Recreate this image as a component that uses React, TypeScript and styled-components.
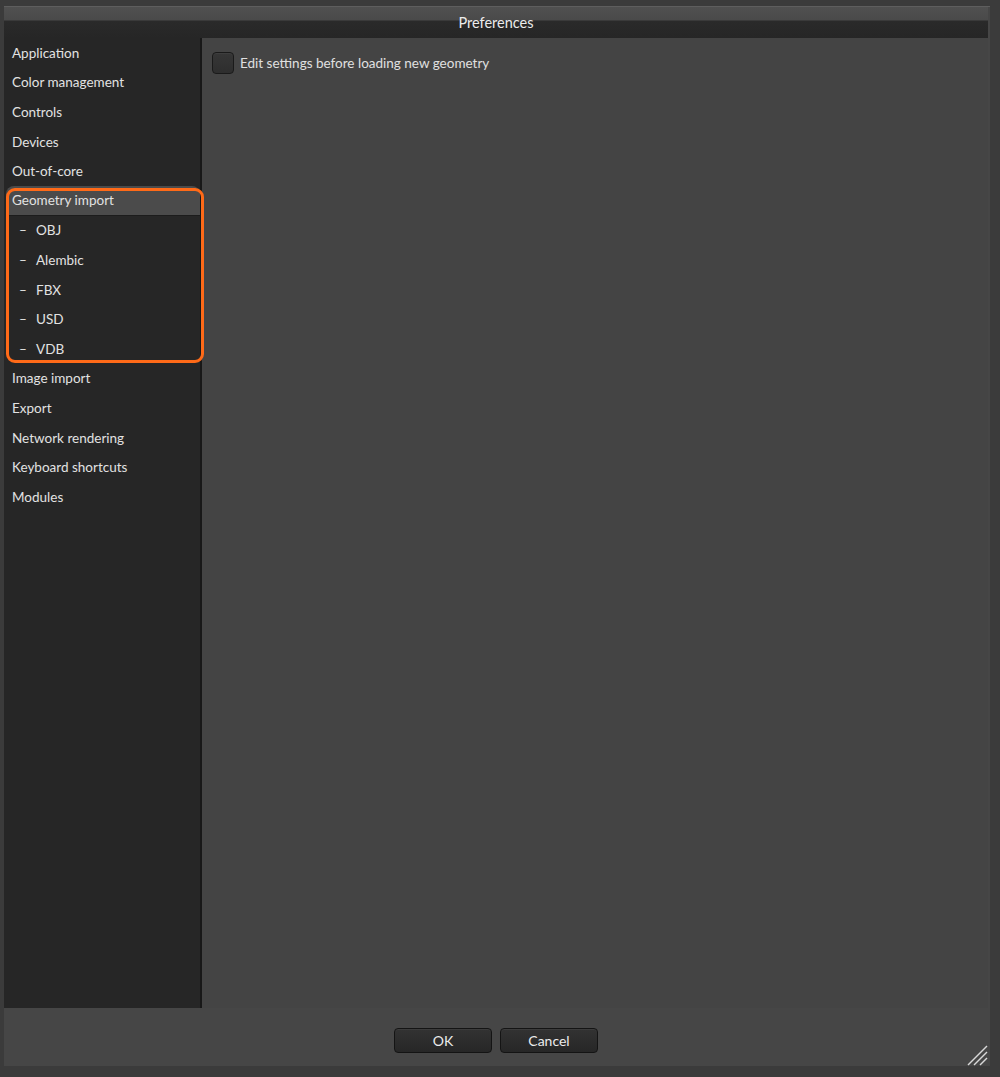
import styled, { createGlobalStyle } from 'styled-components';

type Page = {
    label: string,
    children?: string[],
}

const pages: Page[] = [
    { label: 'Application' },
    { label: 'Color management' },
    { label: 'Controls' },
    { label: 'Devices' },
    { label: 'Out-of-core' },
    { label: 'Geometry import', children: ['OBJ', 'Alembic', 'FBX', 'USD', 'VDB'] },
    { label: 'Image import' },
    { label: 'Export' },
    { label: 'Network rendering' },
    { label: 'Keyboard shortcuts' },
    { label: 'Modules' },
];

const selected = 'Geometry import';

const ResizeGrip = () => (
    <Grip width='22' height='22' viewBox='0 0 22 22'>
        <g stroke='#d8d8d8' strokeWidth='1.4'>
            <line x1='2' y1='21' x2='21' y2='2' />
            <line x1='8' y1='21' x2='21' y2='8' />
            <line x1='14' y1='21' x2='21' y2='14' />
        </g>
    </Grip>
);

export default function App() {
    return (
        <>
            <GlobalStyle />
            <Window>
                <TitleBar>Preferences</TitleBar>
                <Body>
                    <Sidebar>
                        {pages.map((page) =>
                            page.children ? (
                                <Group key={page.label}>
                                    <NavItem $active={page.label === selected}>{page.label}</NavItem>
                                    {page.children.map((child) => (
                                        <SubItem key={child}>
                                            <Dash>–</Dash>
                                            {child}
                                        </SubItem>
                                    ))}
                                </Group>
                            ) : (
                                <NavItem key={page.label} $active={page.label === selected}>{page.label}</NavItem>
                            )
                        )}
                    </Sidebar>
                    <Content>
                        <CheckRow>
                            <CheckBox />
                            <span>Edit settings before loading new geometry</span>
                        </CheckRow>
                    </Content>
                </Body>
                <Footer>
                    <Button>OK</Button>
                    <Button>Cancel</Button>
                </Footer>
                <ResizeGrip />
            </Window>
        </>
    );
}

const GlobalStyle = createGlobalStyle`
    html, body {
        margin: 0;
        padding: 0;
        background: #3b3b3b;
    }
    body {
        font-family: Lato, 'Liberation Sans', sans-serif;
        font-size: 13.5px;
        color: #e2e2e2;
    }
`;

const Window = styled.div`
    position: relative;
    box-sizing: border-box;
    width: 986px;
    height: 1060px;
    margin: 6px 0 0 4px;
    padding-right: 2px;
    display: flex;
    flex-direction: column;
    background: #464646;
    border-top: 1px solid #5e5e5e;
`;

const TitleBar = styled.div`
    height: 31px;
    display: flex;
    align-items: center;
    justify-content: center;
    font-size: 14.5px;
    color: #ececec;
    background: linear-gradient(to bottom, #505050 0, #4a4a4a 13px, #2a2a2a 14px, #262626 100%);
`;

const Body = styled.div`
    flex: 1;
    display: flex;
    min-height: 0;
`;

const Sidebar = styled.div`
    width: 196px;
    flex-shrink: 0;
    background: #262626;
    border-right: 2px solid #181818;
    display: flex;
    flex-direction: column;
`;

const Group = styled.div`
    position: relative;

    &::after {
        content: '';
        position: absolute;
        top: 2px;
        bottom: 1px;
        left: 2px;
        right: -4px;
        border: 3px solid #ff6a18;
        border-radius: 9px;
        pointer-events: none;
    }
`;

const NavItem = styled.div<{ $active?: boolean }>`
    height: 29.6px;
    display: flex;
    align-items: center;
    padding-left: 6px;
    margin-left: 2px;
    background: ${(p) => (p.$active ? '#4b4b4b' : 'transparent')};
    border-bottom: ${(p) => (p.$active ? '1px solid #1c1c1c' : 'none')};
    box-sizing: border-box;
    border-radius: ${(p) => (p.$active ? '8px 8px 0 0' : '0')};
`;

const SubItem = styled.div`
    height: 29.6px;
    display: flex;
    align-items: center;
    padding-left: 15px;
`;

const Dash = styled.span`
    width: 17px;
`;

const Content = styled.div`
    flex: 1;
    background: #444444;
    padding: 14px 10px;
`;

const CheckRow = styled.label`
    display: flex;
    align-items: center;
    gap: 6px;
    color: #e0e0e0;
`;

const CheckBox = styled.span`
    box-sizing: border-box;
    width: 22px;
    height: 22px;
    border-radius: 4px;
    background: linear-gradient(to bottom, #363636, #2e2e2e);
    border: 1px solid #1a1a1a;
    box-shadow: inset 0 1px 0 #3e3e3e;
`;

const Footer = styled.div`
    height: 58px;
    display: flex;
    justify-content: center;
    align-items: flex-start;
    padding-top: 20px;
    gap: 8px;
    box-sizing: border-box;
`;

const Button = styled.button`
    box-sizing: border-box;
    width: 98px;
    height: 25px;
    border-radius: 4px;
    border: 1px solid #141414;
    background: linear-gradient(to bottom, #323232, #272727);
    box-shadow: inset 0 1px 0 #3c3c3c;
    color: #ececec;
    font-family: Lato, 'Liberation Sans', sans-serif;
    font-size: 14px;
    padding: 0;
`;

const Grip = styled.svg`
    position: absolute;
    right: 2px;
    bottom: 0;
`;
